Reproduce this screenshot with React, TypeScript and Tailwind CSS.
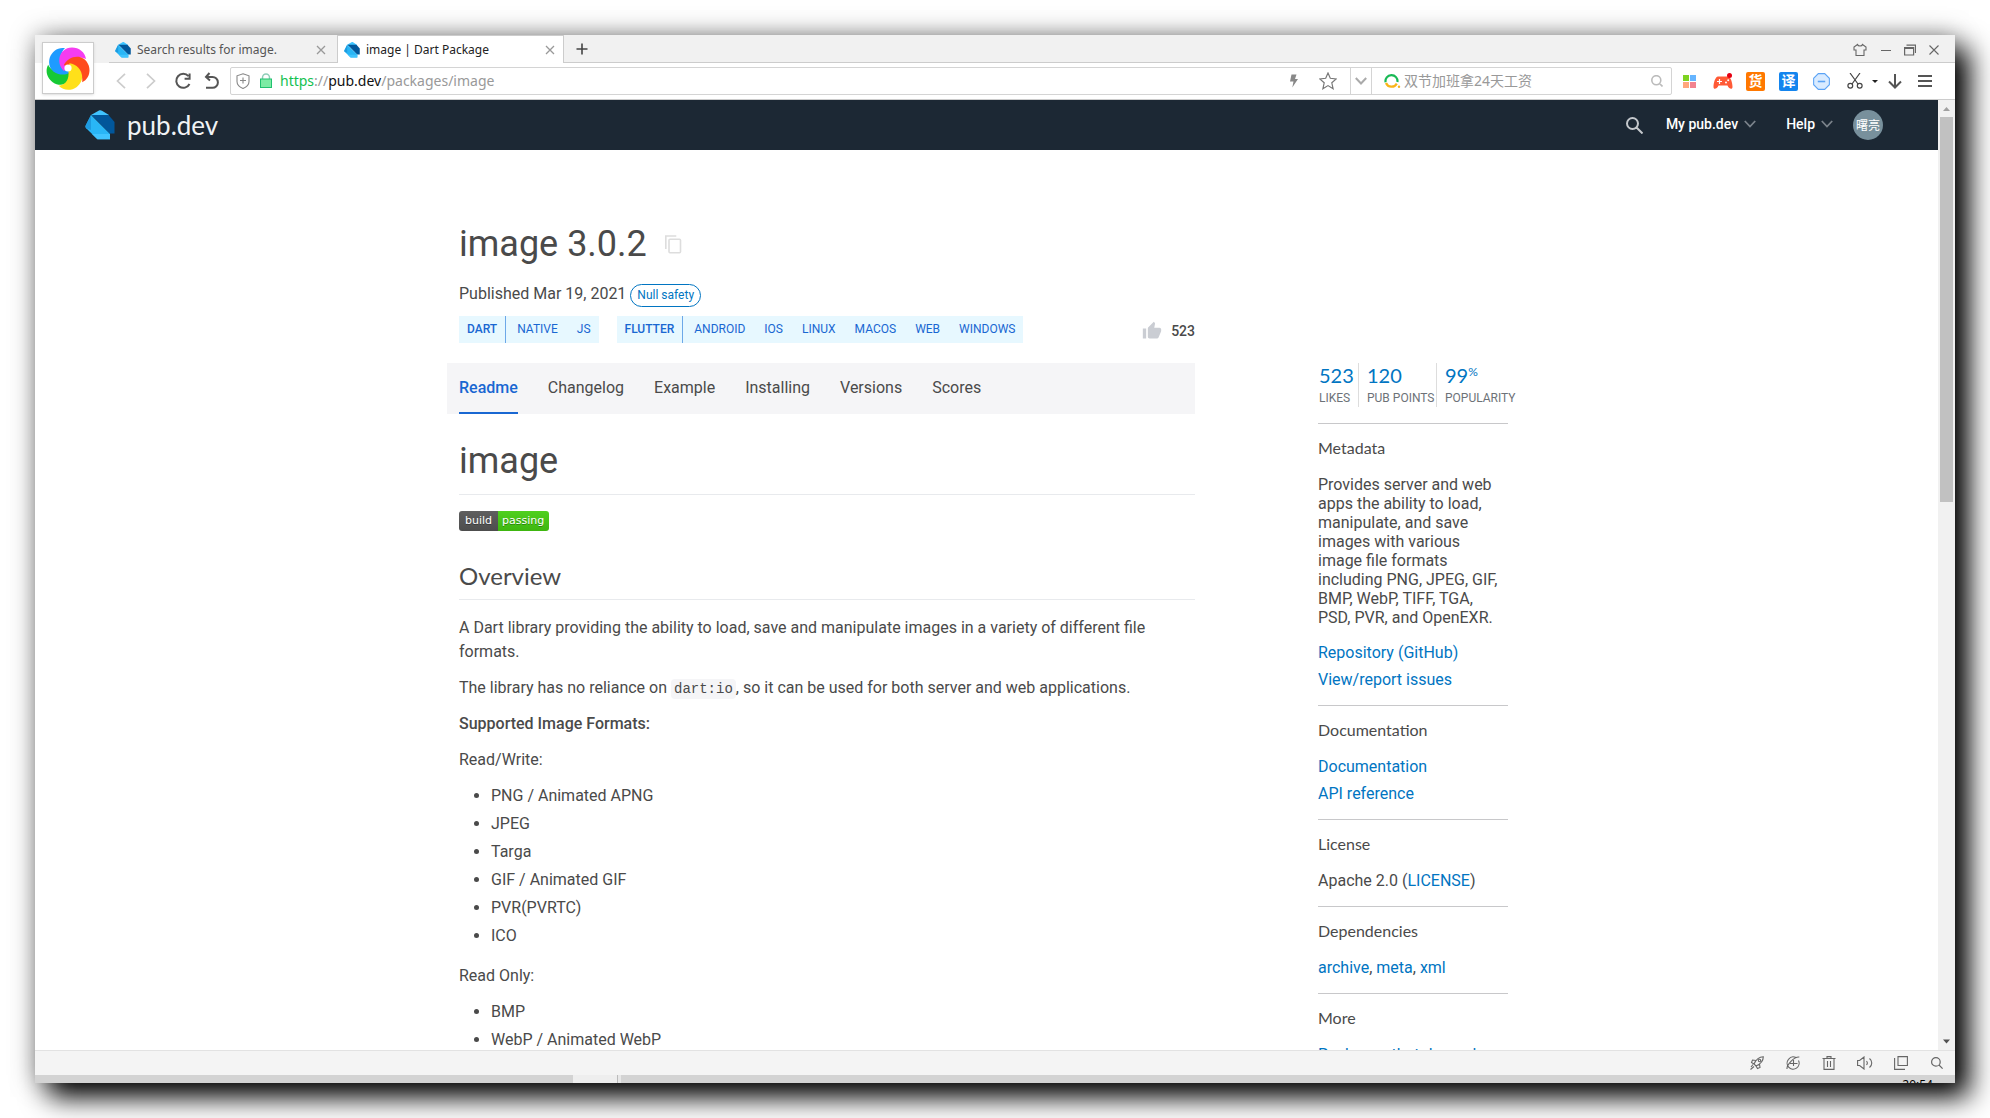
import React from "react";
import type { ReactNode } from "react";

const LINK = "text-[#0175c2] hover:underline";

function DartLogo({ className }: { className: string }) {
  return (
    <svg viewBox="0 0 30 30" className={className} aria-hidden="true">
      <path d="M6 5L14 .6c1-.6 2-.5 3 .1l7 4.3L17 12z" fill="#40c4ff" />
      <path d="M6.500 5H23.500l6 7v11.500h-5z" fill="#01579b" />
      <path d="M6 5l19 19v5.200H12.500L1.200 18.200c-.9-1-.9-1.800-.4-2.900z" fill="#29b6f6" />
      <path d="M7 24h18v5.200H12.300z" fill="#40c4ff" />
      <path d="M6 5v15L1.200 18.200c-.9-1-.9-1.800-.4-2.900z" fill="#1e9be0" />
    </svg>
  );
}

function Pinwheel() {
  const petals = [
    { color: "#16c934", angle: 216 },
    { color: "#1e9bff", angle: 288 },
    { color: "#f53cf0", angle: 0 },
    { color: "#ff4a1c", angle: 72 },
    { color: "#ffe01a", angle: 144 },
  ];
  return (
    <svg viewBox="-22 -22 44 44" className="size-11" aria-hidden="true">
      {petals.map((p) => (
        <path
          key={p.color}
          transform={`rotate(${p.angle})`}
          fill={p.color}
          d="M-4 3C-12-4-10-20 4-20.500C11-20.500 17-16 18-9C12-12 6-11 1-2Z"
        />
      ))}
      <circle r="3.600" fill="#fff" />
    </svg>
  );
}

function Stroke({
  d,
  className,
  w = 1.5,
  box = "0 0 20 20",
  children,
}: {
  d?: string;
  className: string;
  w?: number;
  box?: string;
  children?: ReactNode;
}) {
  return (
    <svg viewBox={box} className={className} fill="none" stroke="currentColor" strokeWidth={w} aria-hidden="true">
      {d && <path d={d} />}
      {children}
    </svg>
  );
}

function IconButton({ label, className, children }: { label: string; className: string; children: ReactNode }) {
  return (
    <button type="button" aria-label={label} className={`flex shrink-0 items-center justify-center ${className}`}>
      {children}
    </button>
  );
}

function TabBar() {
  return (
    <div className="flex h-7 shrink-0 items-stretch bg-[#f1f1f1] pl-[74px] font-['Noto_Sans','Noto_Sans_CJK_SC',sans-serif] text-xs">
      <div className="flex w-[228px] items-center border-b border-[#ccc] pt-0.5 pr-2 pl-1.5">
        <DartLogo className="size-4" />
        <button type="button" className="ml-1.5 flex-1 truncate text-left text-[#555]">
          Search results for image.
        </button>
        <IconButton label="Close tab" className="size-4 text-[#999]">
          <Stroke className="size-2.5" box="0 0 10 10" w={1.3} d="M1 1l8 8M9 1l-8 8" />
        </IconButton>
      </div>
      <div className="flex w-[227px] items-center border-x border-t border-[#ccc] bg-white pr-[5px] pl-1.5">
        <DartLogo className="size-4" />
        <button type="button" className="ml-1.5 flex-1 truncate text-left text-[#222]">
          image | Dart Package
        </button>
        <IconButton label="Close tab" className="size-4 text-[#999]">
          <Stroke className="size-2.5" box="0 0 10 10" w={1.3} d="M1 1l8 8M9 1l-8 8" />
        </IconButton>
      </div>
      <div className="flex flex-1 items-center border-b border-[#ccc] pr-[9px] text-[#666]">
        <IconButton label="New tab" className="w-9">
          <Stroke className="size-3 text-[#444]" box="0 0 12 12" w={1.6} d="M6 .500v11M.500 6h11" />
        </IconButton>
        <div className="ml-auto flex items-center pt-0.5">
          <IconButton label="Skins" className="w-7">
            <Stroke
              className="size-3.5"
              box="0 0 14 14"
              w={1.1}
              d="M4.500 1.500C5 3.500 9 3.500 9.500 1.500L13 4v3h-2v5.500H3V7H1V4z"
            />
          </IconButton>
          <IconButton label="Minimize" className="w-6">
            <Stroke className="h-3 w-2.5" box="0 0 10 12" w={1} d="M0 6.500h10" />
          </IconButton>
          <IconButton label="Restore" className="w-6">
            <Stroke className="size-3" box="0 0 12 12" w={1.2} d="M.600 3.500h9v7.500h-9zM.600 4.500h9M2.500 1.200h9V9" />
          </IconButton>
          <IconButton label="Close" className="w-6">
            <Stroke className="size-2.5" box="0 0 10 10" w={1.1} d="M.500.500l9 9M9.500.500l-9 9" />
          </IconButton>
        </div>
      </div>
    </div>
  );
}

function Toolbar() {
  return (
    <div className="flex h-[37px] shrink-0 items-center border-b border-[#ccc] bg-white pr-4 pl-[71px] font-['Noto_Sans','Noto_Sans_CJK_SC',sans-serif]">
      <IconButton label="Back" className="w-[30px] text-[#ccc]">
        <Stroke className="h-4 w-2.5" box="0 0 10 16" w={1.7} d="M9 .800L1.500 8 9 15.200" />
      </IconButton>
      <IconButton label="Forward" className="w-[30px] text-[#ccc]">
        <Stroke className="h-4 w-2.5" box="0 0 10 16" w={1.7} d="M1 .800L8.500 8 1 15.200" />
      </IconButton>
      <IconButton label="Reload" className="ml-0.5 w-[30px] text-[#555]">
        <Stroke className="size-[18px]" box="0 0 18 18" w={2} d="M14.500 4.200A7 7 0 1 0 15.500 12M15.600 1.500v5.300h-5" />
      </IconButton>
      <IconButton label="Undo" className="w-[28px] text-[#555]">
        <Stroke className="size-[18px]" box="0 0 18 18" w={2} d="M6.500 1L3 5l4 3.500M3 5h6.500a5.400 5.400 0 0 1 0 10.800H3" />
      </IconButton>
      <div className="ml-1 flex h-7 flex-1 items-stretch rounded-xs border border-[#d4d4d4]">
        <div className="flex flex-1 items-center">
          <Stroke className="ml-1 size-4 text-[#888]" box="0 0 16 16" w={1.1}>
            <path d="M8 .800l6 2v5.700c0 3-2.500 5.500-6 7-3.500-1.500-6-4-6-7V2.800zM8 4.500v6M5 7.500h6" />
          </Stroke>
          <svg viewBox="0 0 14 16" className="ml-2 h-4 w-3.5" aria-hidden="true">
            <path d="M3.500 7V4.500a3.500 3.500 0 0 1 7 0V7" fill="none" stroke="#8ecdb8" strokeWidth="1.500" />
            <rect x="1.500" y="6" width="11" height="8.500" fill="#7deca4" stroke="#22c070" />
          </svg>
          <div
            role="textbox"
            aria-label="Address"
            contentEditable
            suppressContentEditableWarning
            className="ml-[7px] flex-1 text-sm text-[#999] outline-none"
          >
            <span className="text-[#12c150]">https</span>://<span className="text-[#111]">pub.dev</span>/packages/image
          </div>
          <IconButton label="Fast mode" className="w-6 text-[#888]">
            <svg viewBox="0 0 8 13" className="h-3.5 w-2" fill="currentColor" aria-hidden="true">
              <path d="M1.500 0h5L5 4.500h3L2.300 13 3.500 7H0z" />
            </svg>
          </IconButton>
          <IconButton label="Bookmark" className="mr-3 ml-3 w-5 text-[#777]">
            <Stroke
              className="size-[18px]"
              box="0 0 18 18"
              w={1.2}
              d="M9 1l2.300 5.300 5.900.600-4.400 3.900 1.300 5.900L9 13.600l-5.100 3.100 1.300-5.900L.800 6.900l5.900-.600z"
            />
          </IconButton>
        </div>
        <IconButton label="Address history" className="w-[22px] border-x border-[#d4d4d4] text-[#aaa]">
          <Stroke className="h-2 w-3" box="0 0 12 8" w={2} d="M.800 1L6 6.500 11.200 1" />
        </IconButton>
        <div className="flex w-[299px] items-center">
          <svg viewBox="0 0 18 16" className="ml-3 h-4 w-[18px]" fill="none" strokeWidth="2.200" aria-hidden="true">
            <path d="M1.600 9.300A6 6 0 1 1 13.400 9" stroke="#19b955" />
            <path d="M2 10a6 6 0 0 0 10.800.600" stroke="#f9b418" />
            <circle cx="15" cy="13.800" r="1.200" fill="#f9b418" stroke="none" />
          </svg>
          <input
            type="text"
            aria-label="Web search"
            placeholder="双节加班拿24天工资"
            className="ml-0.5 min-w-0 flex-1 text-sm outline-none placeholder:text-[#999]"
          />
          <IconButton label="Search the web" className="mr-0.5 w-6 text-[#bbb]">
            <Stroke className="size-3" box="0 0 12 12" w={1.6} d="M9.800 5.200a4.500 4.500 0 1 1-9 0 4.500 4.500 0 0 1 9 0zM8.500 8.500l3 3" />
          </IconButton>
        </div>
      </div>
      <IconButton label="Apps" className="ml-px w-[33px]">
        <span className="grid size-[13px] grid-cols-2 gap-px">
          <span className="bg-[#7ed321]" />
          <span className="bg-[#66b5ff]" />
          <span className="bg-[#ffa77c]" />
          <span className="bg-[#f2838f]" />
        </span>
      </IconButton>
      <IconButton label="Games" className="w-[33px]">
        <svg viewBox="0 0 20 17" className="h-[17px] w-5" aria-hidden="true">
          <path d="M5 3.500h10c2.500 0 4.500 6 4.500 10.500 0 3-3.500 2-5-1.500h-9C4 16 .500 17 .500 14 .500 9.500 2.500 3.500 5 3.500z" fill="#ff5a36" />
          <path d="M6.500 6v5M4 8.500h5" stroke="#fff" strokeWidth="1.200" />
          <circle cx="13" cy="9.500" r="1" fill="#fff" />
          <circle cx="15.200" cy="7.300" r="1" fill="#fff" />
          <circle cx="16.500" cy="2.500" r="2.500" fill="#e60012" />
        </svg>
      </IconButton>
      <IconButton label="Shopping" className="w-[33px]">
        <span className="flex size-[19px] items-center justify-center rounded-xs bg-[#ff7800] text-sm font-bold text-white">货</span>
      </IconButton>
      <IconButton label="Translate" className="w-[33px]">
        <span className="flex size-[19px] items-center justify-center rounded-xs bg-[#1485ee] text-sm font-bold text-white">译</span>
      </IconButton>
      <IconButton label="Block ads" className="w-[33px]">
        <svg viewBox="0 0 16 16" className="size-[17px]" fill="#d9ebff" stroke="#5ba3f5" aria-hidden="true">
          <path d="M5 .600h6L15.400 5v6L11 15.400H5L.600 11V5z" />
          <path d="M4.500 8h7" strokeWidth="1.500" />
        </svg>
      </IconButton>
      <IconButton label="Screenshot" className="w-[33px] text-[#444]">
        <Stroke className="size-4" box="0 0 16 16" w={1.2}>
          <path d="M3 0l8 11M13 0L5 11" />
          <circle cx="3.300" cy="12.800" r="2.400" />
          <circle cx="12.700" cy="12.800" r="2.400" />
        </Stroke>
      </IconButton>
      <IconButton label="Screenshot options" className="w-2">
        <svg viewBox="0 0 6 3" className="h-[3px] w-1.5" aria-hidden="true">
          <path d="M0 0h6L3 3z" fill="#222" />
        </svg>
      </IconButton>
      <IconButton label="Downloads" className="w-8 text-[#555]">
        <Stroke className="h-[15px] w-3.5" box="0 0 14 15" w={2} d="M7 0v13M1 7.500l6 6 6-6" />
      </IconButton>
      <IconButton label="Menu" className="w-7 text-[#555]">
        <Stroke className="h-3 w-3.5" box="0 0 14 12" w={2} d="M0 1h14M0 6h14M0 11h14" />
      </IconButton>
    </div>
  );
}

function Chevron() {
  return <Stroke className="ml-1.5 h-2 w-3 text-[#7b838b]" box="0 0 12 8" w={1.8} d="M.800 1L6 6.500 11.200 1" />;
}

function SiteHeader() {
  return (
    <header className="flex h-[50px] items-center bg-[#1c2834] pr-[55px] pl-[50px] text-sm text-white">
      <a href="#home" className="flex items-center gap-3">
        <DartLogo className="size-[30px]" />
        <span className="font-[Lato,sans-serif] text-[26px] leading-8 text-[#f0f3f5]">pub.dev</span>
      </a>
      <div className="ml-auto flex items-center">
        <IconButton label="Search packages" className="text-[#c4c8cc]">
          <Stroke className="size-[17px]" box="0 0 17 17" w={2} d="M12 6.500a5.500 5.500 0 1 1-11 0 5.500 5.500 0 0 1 11 0zM10.500 10.500l6 6" />
        </IconButton>
        <button type="button" className="ml-[23px] flex items-center pb-0.5 font-medium">
          My pub.dev
          <Chevron />
        </button>
        <button type="button" className="ml-[30px] flex items-center pb-0.5 font-medium">
          Help
          <Chevron />
        </button>
        <button
          type="button"
          className="ml-5 flex size-[30px] items-center justify-center rounded-full bg-[#78909c] font-['Noto_Sans_CJK_SC',sans-serif] text-xs whitespace-nowrap"
        >
          曙亮
        </button>
      </div>
    </header>
  );
}

function TagGroup({ main, rest }: { main: string; rest: string[] }) {
  return (
    <div className="flex h-[27px] items-stretch bg-[#e7f8ff] text-xs leading-[26px] text-[#1967d2]">
      <a href={`#${main}`} className="border-r border-[#6da8e8] px-2 font-medium">
        {main}
      </a>
      <div className="flex gap-[19px] pr-2 pl-[11px]">
        {rest.map((t) => (
          <a key={t} href={`#${t}`}>
            {t}
          </a>
        ))}
      </div>
    </div>
  );
}

function List({ items }: { items: string[] }) {
  return (
    <ul className="mb-4 list-disc space-y-1 pl-8">
      {items.map((i) => (
        <li key={i}>{i}</li>
      ))}
    </ul>
  );
}

function Package() {
  const tabs = ["Changelog", "Example", "Installing", "Versions", "Scores"];
  return (
    <main className="w-[748px]">
      <div className="pl-3">
        <div className="flex items-center">
          <h1 className="text-4xl leading-[44px] text-[#4a4a4a]">image 3.0.2</h1>
          <IconButton label="Copy package name" className="ml-[18px] text-[#ddd]">
            <svg viewBox="0 0 17 19" className="h-[19px] w-[17px]" fill="none" stroke="currentColor" strokeWidth="1.600" aria-hidden="true">
              <path d="M.800 14V1h10.500" />
              <rect x="4" y="4.300" width="11.500" height="13.500" rx="1" />
            </svg>
          </IconButton>
        </div>
        <div className="mt-3.5 flex items-center">
          <span>Published Mar 19, 2021</span>
          <a href="#null-safety" className="mt-1 ml-1 rounded-full border border-[#0175c2] px-1.5 text-xs leading-[21px] text-[#0175c2]">
            Null safety
          </a>
        </div>
        <div className="mt-[9px] flex items-start">
          <TagGroup main="DART" rest={["NATIVE", "JS"]} />
          <div className="w-[18px]" />
          <TagGroup main="FLUTTER" rest={["ANDROID", "IOS", "LINUX", "MACOS", "WEB", "WINDOWS"]} />
          <button type="button" className="mt-[5px] ml-auto flex items-center gap-[9px] text-sm font-medium text-[#4a4a4a]">
            <svg viewBox="0 0 24 24" className="size-5" fill="#cacdd3" aria-hidden="true">
              <path d="M1 21h4V9H1v12zm22-11c0-1.100-.900-2-2-2h-6.310l.950-4.570.030-.320c0-.410-.170-.790-.440-1.060L14.170 1 7.590 7.590C7.220 7.950 7 8.450 7 9v10c0 1.100.900 2 2 2h9c.830 0 1.540-.500 1.840-1.220l3.020-7.050c.090-.230.140-.470.140-.730v-2z" />
            </svg>
            523
          </button>
        </div>
      </div>
      <nav className="mt-5 flex h-[51px] gap-[30px] bg-[#f5f5f7] pl-3 leading-[49px]">
        <a href="#readme" className="border-b-2 border-[#1967d2] font-medium text-[#1967d2]">
          Readme
        </a>
        {tabs.map((t) => (
          <a key={t} href={`#${t}`}>
            {t}
          </a>
        ))}
      </nav>
      <article className="pl-3 leading-6">
        <h2 className="mt-[26px] border-b border-[#e8eaed] pb-[11px] text-4xl leading-[43px]">image</h2>
        <a href="#build" className="mt-4 flex w-fit overflow-hidden rounded-[3px] font-['DejaVu_Sans',sans-serif] text-[11px] leading-5 text-white [text-shadow:0_1px_#0005]">
          <span className="bg-linear-to-b from-[#5f5f5f] to-[#4d4d4d] px-1.5">build</span>
          <span className="bg-linear-to-b from-[#4fd01f] to-[#3eb60f] pr-[5px] pl-1">passing</span>
        </a>
        <h3 className="mt-[29px] mb-4 border-b border-[#e8eaed] pb-[7px] font-[Lato,sans-serif] text-2xl leading-8">Overview</h3>
        <p className="mb-3">
          A Dart library providing the ability to load, save and manipulate images in a variety of different file formats.
        </p>
        <p className="mb-3">
          The library has no reliance on{" "}
          <code className="rounded-sm bg-[#f5f5f7] px-[3px] py-0.5 font-['Liberation_Mono',monospace] text-sm">dart:io</code>, so it
          can be used for both server and web applications.
        </p>
        <p className="mb-3 font-medium">Supported Image Formats:</p>
        <p className="mb-3">Read/Write:</p>
        <List items={["PNG / Animated APNG", "JPEG", "Targa", "GIF / Animated GIF", "PVR(PVRTC)", "ICO"]} />
        <p className="mb-3">Read Only:</p>
        <List items={["BMP", "WebP / Animated WebP"]} />
      </article>
    </main>
  );
}

function Stat({ value, unit, label, className }: { value: string; unit?: string; label: string; className: string }) {
  return (
    <a href={`#${label}`} className={`flex shrink-0 flex-col ${className}`}>
      <span className="flex font-[Lato,sans-serif] text-xl leading-6 text-[#0175c2]">
        {value}
        {unit && <span className="text-xs leading-[18px]">{unit}</span>}
      </span>
      <span className="text-xs leading-[22px] whitespace-nowrap text-[#6d7278]">{label}</span>
    </a>
  );
}

function Section({ title, children }: { title: string; children: ReactNode }) {
  return (
    <section className="border-t border-[#c8c8ca] py-4">
      <h3 className="mb-5 font-[Lato,sans-serif] leading-[15px]">{title}</h3>
      {children}
    </section>
  );
}

function Sidebar() {
  return (
    <aside className="mt-[141px] w-[190px] leading-[19px]">
      <div className="mb-4 flex h-11">
        <Stat value="523" label="LIKES" className="w-[41px] border-r border-[#ddd] pl-px" />
        <Stat value="120" label="PUB POINTS" className="w-[78px] border-r border-[#ddd] pl-2" />
        <Stat value="99" unit="%" label="POPULARITY" className="pl-2" />
      </div>
      <Section title="Metadata">
        <p className="mb-4">
          Provides server and web apps the ability to load, manipulate, and save images with various image file formats including
          PNG, JPEG, GIF, BMP, WebP, TIFF, TGA, PSD, PVR, and OpenEXR.
        </p>
        <div className="flex flex-col items-start gap-2">
          <a href="#repo" className={LINK}>Repository (GitHub)</a>
          <a href="#issues" className={LINK}>View/report issues</a>
        </div>
      </Section>
      <Section title="Documentation">
        <div className="flex flex-col items-start gap-2">
          <a href="#docs" className={LINK}>Documentation</a>
          <a href="#api" className={LINK}>API reference</a>
        </div>
      </Section>
      <Section title="License">
        <p>
          Apache 2.0 (<a href="#license" className={LINK}>LICENSE</a>)
        </p>
      </Section>
      <Section title="Dependencies">
        <p>
          <a href="#archive" className={LINK}>archive</a>, <a href="#meta" className={LINK}>meta</a>,{" "}
          <a href="#xml" className={LINK}>xml</a>
        </p>
      </Section>
      <Section title="More">
        <a href="#dependents" className={LINK}>Packages that depend on image</a>
      </Section>
    </aside>
  );
}

function Scrollbar() {
  return (
    <div className="flex w-[17px] shrink-0 flex-col items-center bg-[#f1f1f1]" aria-hidden="true">
      <svg viewBox="0 0 17 17" className="size-[17px]">
        <path d="M5 11h7L8.500 7z" fill="#a0a0a0" />
      </svg>
      <div className="flex w-[13px] flex-1 flex-col">
        <div className="h-[42%] bg-[#c1c1c1]" />
      </div>
      <svg viewBox="0 0 17 17" className="size-[17px]">
        <path d="M5 6.500h7l-3.500 4z" fill="#505050" />
      </svg>
    </div>
  );
}

function StatusBar() {
  return (
    <footer className="shrink-0">
      <div className="flex h-[25px] items-center justify-end border-t border-[#e2e2e2] bg-[#f4f4f4] text-[#666]">
        <IconButton label="Boost" className="w-9">
          <Stroke className="size-3.5" box="0 0 14 14" w={1.1}>
            <path d="M13.300.700C9 .700 6 3.500 4 8l2 2c4.500-2 7.300-5 7.300-9.300zM6 4.500L2.500 4 1.500 6.500 4 8M9.500 8l.500 3.500-2.500 1L6 10M4 10.500L.500 13.500M3 8.500L1 11" />
            <circle cx="9.500" cy="4.500" r="1.200" />
          </Stroke>
        </IconButton>
        <IconButton label="Compatibility mode" className="w-9">
          <Stroke className="size-3.5" box="0 0 14 14" w={1.1}>
            <path d="M12.500 4.500A6 6 0 1 1 2.500 3.300 6 6 0 0 1 10 1.600M1 13C.500 9 8 .500 13.300 1M7.500 4v6M4 7.500h7.500" />
          </Stroke>
        </IconButton>
        <IconButton label="Clear traces" className="w-9">
          <Stroke className="size-3.5" box="0 0 14 14" w={1.1} d="M.500 2.500h13M5 2.300V.600h4v1.700M2 2.500v10.900h10V2.500M5.500 5v6M8.500 5v6" />
        </IconButton>
        <IconButton label="Sound" className="w-[35px]">
          <Stroke className="h-3.5 w-4" box="0 0 16 14" w={1.1} d="M.600 4.500h2L7 1v12L2.600 9.500h-2zM9.500 5c1 1.200 1 2.800 0 4M12.500 2.500c3 2.500 3 6.500 0 9" />
        </IconButton>
        <IconButton label="Windows" className="w-[37px]">
          <Stroke className="size-3.5" box="0 0 14 14" w={1.1} d="M4 .600h9.400V9.500H4zM.600 2v11.400H11" />
        </IconButton>
        <IconButton label="Zoom" className="w-9">
          <Stroke className="size-3" box="0 0 12 12" w={1.2} d="M9.200 4.900a4.300 4.300 0 1 1-8.600 0 4.300 4.300 0 0 1 8.600 0zM8 8l3.600 3.600" />
        </IconButton>
      </div>
      <div className="flex h-2 items-start overflow-hidden bg-[#d3d3d3]">
        <div className="ml-[538px] h-full w-11 bg-[#eee]" />
        <div className="h-full w-1 border-l border-[#bbb] bg-[#e8e8e8]" />
        <span className="mt-1 mr-[22px] ml-auto font-['Noto_Sans',sans-serif] text-xs leading-3 text-black">20:54</span>
      </div>
    </footer>
  );
}

export default function App() {
  return (
    <div className="h-screen bg-white p-[35px]">
      <div className="relative flex h-full flex-col bg-white font-[Roboto,sans-serif] text-base text-[#4a4a4a] shadow-[14px_14px_26px_#000,0_0_24px_rgba(0,0,0,0.35)]">
        <TabBar />
        <Toolbar />
        <button
          type="button"
          aria-label="Browser home"
          className="absolute top-[7px] left-[7px] flex size-[52px] items-center justify-center border border-[#ccc] bg-white shadow-sm"
        >
          <Pinwheel />
        </button>
        <div className="flex min-h-0 flex-1">
          <div className="flex-1 overflow-hidden">
            <SiteHeader />
            <div className="mx-auto flex max-w-[1079px] justify-between pt-[72px] pr-[18px]">
              <Package />
              <Sidebar />
            </div>
          </div>
          <Scrollbar />
        </div>
        <StatusBar />
      </div>
    </div>
  );
}
